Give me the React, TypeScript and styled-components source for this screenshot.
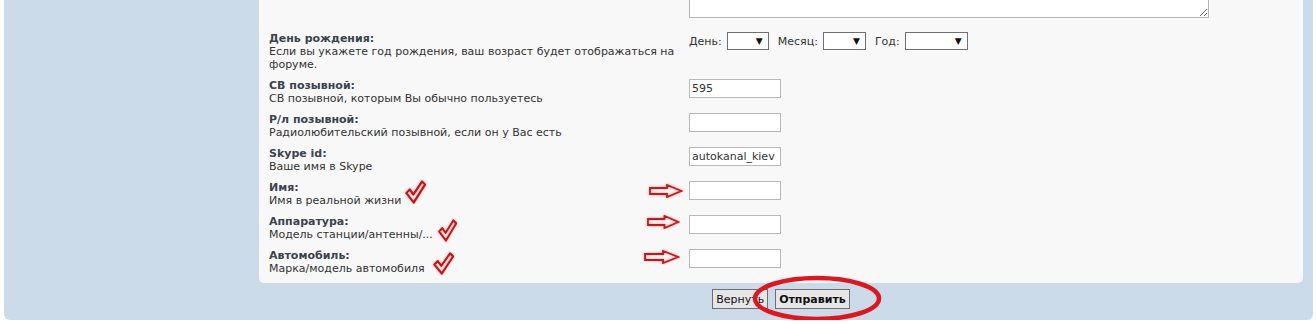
import styled, { createGlobalStyle } from "styled-components";

const GlobalStyle = createGlobalStyle`
  html, body {
    margin: 0;
    padding: 0;
    background: #ffffff;
    overflow: hidden;
  }
  body {
    font-family: "DejaVu Sans", Verdana, sans-serif;
    font-size: 11px;
    color: #333333;
  }
`;

const Page = styled.div`
  margin: -56px 3px 0 4px;
`;

const Frame = styled.div`
  display: grid;
  grid-template-columns: 255px 1fr;
  background: #cbdbea;
  border-radius: 0 0 6px 6px;
  padding: 0 10px 11px 0;
`;

const Sidebar = styled.div``;

const Main = styled.div`
  display: flex;
  flex-direction: column;
`;

const FormPanel = styled.div`
  background: #f8f8f8;
  border-radius: 0 0 5px 5px;
  padding: 0 10px 4px;
`;

const Row = styled.div`
  display: grid;
  grid-template-columns: 420px 1fr;
  padding: 4px 0;
`;

const LabelCell = styled.div`
  line-height: 13px;
`;

const LabelTitle = styled.div`
  font-weight: bold;
  color: #3a4350;
`;

const LabelHint = styled.div`
  color: #333333;
`;

const FieldCell = styled.div`
  position: relative;
  display: flex;
  align-items: flex-start;
`;

const TextArea = styled.textarea`
  display: block;
  box-sizing: border-box;
  width: 520px;
  height: 70px;
  margin: 0 0 6px;
  border: 1px solid #b5b5b5;
  background: #ffffff;
`;

const TextInput = styled.input`
  box-sizing: border-box;
  width: 92px;
  height: 19px;
  padding: 0 2px;
  border: 1px solid #b8b8b8;
  background: #ffffff;
  font-family: "DejaVu Sans", Verdana, sans-serif;
  font-size: 11px;
  color: #333333;
  outline: none;
`;

const DateFields = styled.div`
  display: flex;
  align-items: center;
  height: 18px;
`;

const DateLabel = styled.span<{ $gap: number }>`
  margin: 0 5px 0 ${(p) => p.$gap}px;
  color: #333333;
  white-space: nowrap;
`;

const SelectBox = styled.div<{ $w: number }>`
  box-sizing: border-box;
  width: ${(p) => p.$w}px;
  height: 18px;
  border: 1px solid #707070;
  background: #ffffff;
  display: flex;
  align-items: center;
  justify-content: flex-end;
  padding-right: 5px;
  font-size: 9px;
  color: #111111;
`;

const CheckMark = styled.span<{ $dx: number; $dy: number }>`
  position: relative;
  display: inline-block;
  width: 0;
  height: 13px;
  vertical-align: top;

  svg {
    position: absolute;
    left: ${(p) => p.$dx}px;
    bottom: ${(p) => p.$dy}px;
    filter: drop-shadow(0 0 1px rgba(230, 40, 40, 0.45));
  }
`;

const Arrow = styled.svg<{ $dx: number; $dy: number }>`
  position: absolute;
  left: ${(p) => p.$dx}px;
  top: ${(p) => p.$dy}px;
  filter: drop-shadow(0 0 1px rgba(230, 40, 40, 0.45));
`;

const ButtonBar = styled.div`
  display: flex;
  justify-content: center;
  gap: 7px;
  margin-top: 6px;
`;

const FormButton = styled.button<{ $primary?: boolean }>`
  box-sizing: border-box;
  height: 20px;
  padding: 0 3px;
  border: 1px solid #6f6f6f;
  background: #e6e6e6;
  font-family: "DejaVu Sans", Verdana, sans-serif;
  font-size: 11px;
  font-weight: ${(p) => (p.$primary ? "bold" : "normal")};
  color: #111111;
`;

const Circled = styled.span`
  position: relative;
  display: inline-flex;

  svg {
    position: absolute;
    left: -23px;
    top: -14px;
    pointer-events: none;
  }
`;

const Check = ({ w, h }: { w: number; h: number }) => (
  <svg width={w} height={h} viewBox="0 0 24 24" preserveAspectRatio="none">
    <path
      d="M1.5 13 L5.5 9.5 L9.5 14.5 L19.5 1.5 L23 4.5 L10 22.5 Z"
      fill="none"
      stroke="#c81212"
      strokeWidth="2.3"
      strokeLinejoin="round"
    />
  </svg>
);

const ArrowIcon = ({ dx, dy, w }: { dx: number; dy: number; w: number }) => (
  <Arrow $dx={dx} $dy={dy} width={w} height={14} viewBox="0 0 34 14" preserveAspectRatio="none">
    <path
      d="M1 4 L18 4 L18 1 L32.5 7 L18 13 L18 10 L1 10 Z"
      fill="none"
      stroke="#d01414"
      strokeWidth="1.8"
      strokeLinejoin="miter"
    />
  </Arrow>
);

type Field = {
  title: string;
  hint: string;
  value?: string;
  check?: { dx: number; dy: number; w: number; h: number };
  arrow?: { dx: number; dy: number; w: number };
};

const fields: Field[] = [
  { title: "СВ позывной:", hint: "СВ позывной, которым Вы обычно пользуетесь", value: "595" },
  { title: "Р/л позывной:", hint: "Радиолюбительский позывной, если он у Вас есть" },
  { title: "Skype id:", hint: "Ваше имя в Skype", value: "autokanal_kiev" },
  {
    title: "Имя:",
    hint: "Имя в реальной жизни",
    check: { dx: 4, dy: 3, w: 21, h: 24 },
    arrow: { dx: -40, dy: 3, w: 34 },
  },
  {
    title: "Аппаратура:",
    hint: "Модель станции/антенны/...",
    check: { dx: 5, dy: -1, w: 19, h: 23 },
    arrow: { dx: -42, dy: 0, w: 33 },
  },
  {
    title: "Автомобиль:",
    hint: "Марка/модель автомобиля",
    check: { dx: 8, dy: 0, w: 21, h: 23 },
    arrow: { dx: -45, dy: 1, w: 36 },
  },
];

const App = () => {
  return (
    <>
      <GlobalStyle />
      <Page>
        <Frame>
          <Sidebar />
          <Main>
            <FormPanel>
              <Row>
                <LabelCell />
                <FieldCell>
                  <TextArea />
                </FieldCell>
              </Row>
              <Row>
                <LabelCell>
                  <LabelTitle>День рождения:</LabelTitle>
                  <LabelHint>
                    Если вы укажете год рождения, ваш возраст будет отображаться на форуме.
                  </LabelHint>
                </LabelCell>
                <FieldCell>
                  <DateFields>
                    <DateLabel $gap={0}>День:</DateLabel>
                    <SelectBox $w={42}>▼</SelectBox>
                    <DateLabel $gap={9}>Месяц:</DateLabel>
                    <SelectBox $w={43}>▼</SelectBox>
                    <DateLabel $gap={9}>Год:</DateLabel>
                    <SelectBox $w={63}>▼</SelectBox>
                  </DateFields>
                </FieldCell>
              </Row>
              {fields.map((f) => (
                <Row key={f.title}>
                  <LabelCell>
                    <LabelTitle>{f.title}</LabelTitle>
                    <LabelHint>
                      {f.hint}
                      {f.check && (
                        <CheckMark $dx={f.check.dx} $dy={f.check.dy}>
                          <Check w={f.check.w} h={f.check.h} />
                        </CheckMark>
                      )}
                    </LabelHint>
                  </LabelCell>
                  <FieldCell>
                    {f.arrow && <ArrowIcon dx={f.arrow.dx} dy={f.arrow.dy} w={f.arrow.w} />}
                    <TextInput defaultValue={f.value ?? ""} />
                  </FieldCell>
                </Row>
              ))}
            </FormPanel>
            <ButtonBar>
              <FormButton>Вернуть</FormButton>
              <Circled>
                <FormButton $primary>Отправить</FormButton>
                <svg width="130" height="47" viewBox="0 0 130 47">
                  <ellipse
                    cx="65"
                    cy="23.5"
                    rx="62"
                    ry="20.5"
                    fill="none"
                    stroke="#e0161c"
                    strokeWidth="4.5"
                  />
                </svg>
              </Circled>
            </ButtonBar>
          </Main>
        </Frame>
      </Page>
    </>
  );
};

export default App;
